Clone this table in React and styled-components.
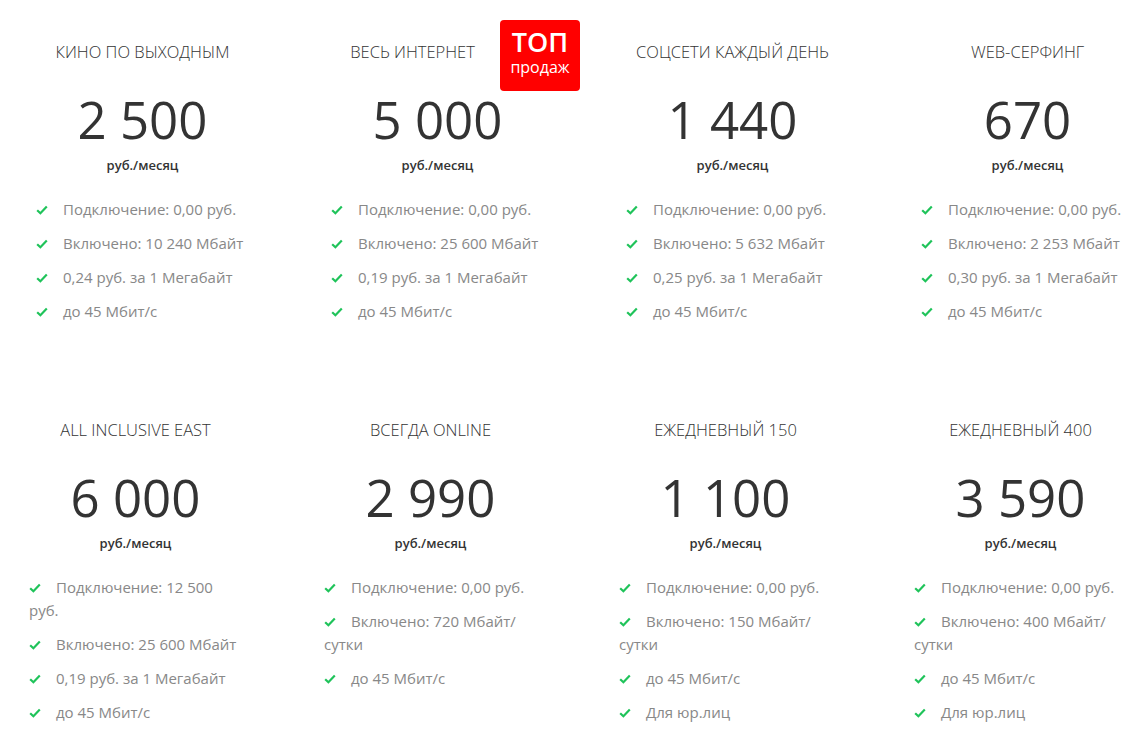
import styled, { createGlobalStyle } from "styled-components"

const GlobalStyle = createGlobalStyle`
  body {
    margin: 0;
    background: #fff;
    font-family: "Open Sans", "Liberation Sans", sans-serif;
    overflow: hidden;
  }
`

const rows = [
  [
    { title: "КИНО ПО ВЫХОДНЫМ", price: "2 500", items: ["Подключение: 0,00 руб.", "Включено: 10 240 Мбайт", "0,24 руб. за 1 Мегабайт", "до 45 Мбит/с"] },
    { title: "ВЕСЬ ИНТЕРНЕТ", price: "5 000", top: true, items: ["Подключение: 0,00 руб.", "Включено: 25 600 Мбайт", "0,19 руб. за 1 Мегабайт", "до 45 Мбит/с"] },
    { title: "СОЦСЕТИ КАЖДЫЙ ДЕНЬ", price: "1 440", items: ["Подключение: 0,00 руб.", "Включено: 5 632 Мбайт", "0,25 руб. за 1 Мегабайт", "до 45 Мбит/с"] },
    { title: "WEB-СЕРФИНГ", price: "670", items: ["Подключение: 0,00 руб.", "Включено: 2 253 Мбайт", "0,30 руб. за 1 Мегабайт", "до 45 Мбит/с"] },
  ],
  [
    { title: "ALL INCLUSIVE EAST", price: "6 000", items: ["Подключение: 12 500 руб.", "Включено: 25 600 Мбайт", "0,19 руб. за 1 Мегабайт", "до 45 Мбит/с"] },
    { title: "ВСЕГДА ONLINE", price: "2 990", items: ["Подключение: 0,00 руб.", "Включено: 720 Мбайт/ сутки", "до 45 Мбит/с"] },
    { title: "ЕЖЕДНЕВНЫЙ 150", price: "1 100", items: ["Подключение: 0,00 руб.", "Включено: 150 Мбайт/ сутки", "до 45 Мбит/с", "Для юр.лиц"] },
    { title: "ЕЖЕДНЕВНЫЙ 400", price: "3 590", items: ["Подключение: 0,00 руб.", "Включено: 400 Мбайт/ сутки", "до 45 Мбит/с", "Для юр.лиц"] },
  ],
]

function Check() {
  return (
    <CheckIcon viewBox="0 0 12 10">
      <polyline points="1.2,5.2 4.4,8.2 10.8,1.6" fill="none" stroke="#1fc35a" strokeWidth="2.2" />
    </CheckIcon>
  )
}

export default function App() {
  return (
    <>
      <GlobalStyle />
      <Page>
        {rows.map((row, r) => (
          <Row key={r} $shift={r === 0 ? -5 : -12}>
            {row.map((t) => (
              <Card key={t.title}>
                <Title $withBadge={t.top}>{t.title}</Title>
                {t.top && (
                  <Badge>
                    <BadgeBig>ТОП</BadgeBig>
                    <BadgeSmall>продаж</BadgeSmall>
                  </Badge>
                )}
                <Price>{t.price}</Price>
                <Period>руб./месяц</Period>
                <List>
                  {t.items.map((it) => (
                    <Item key={it}>
                      <Check />
                      {it}
                    </Item>
                  ))}
                </List>
              </Card>
            ))}
          </Row>
        ))}
      </Page>
    </>
  )
}

const Page = styled.div`
  padding-top: 8px;
`
const Row = styled.div`
  display: grid;
  grid-template-columns: repeat(4, 295px);
  margin-left: ${(p) => p.$shift}px;
`
const Card = styled.div`
  position: relative;
  min-height: 378px;
  padding-top: 33px;
  box-sizing: border-box;
  text-align: center;
`
const Title = styled.div`
  font-size: 16.5px;
  line-height: 22px;
  font-weight: 300;
  color: #333;
  padding-right: ${(p) => (p.$withBadge ? "50px" : "0")};
`
const Badge = styled.div`
  position: absolute;
  left: 210px;
  top: 12px;
  width: 80px;
  height: 71px;
  background: #ff0000;
  border-radius: 4px;
  color: #fff;
  display: flex;
  flex-direction: column;
  align-items: center;
  padding-top: 6px;
  box-sizing: border-box;
`
const BadgeBig = styled.div`
  font-size: 27px;
  line-height: 31px;
  font-weight: 600;
`
const BadgeSmall = styled.div`
  font-size: 16px;
  line-height: 20px;
`
const Price = styled.div`
  margin-top: 26px;
  font-size: 51px;
  line-height: 60px;
  color: #333;
`
const Period = styled.div`
  margin-top: 7px;
  font-size: 13px;
  line-height: 18px;
  font-weight: 600;
  color: #333;
`
const List = styled.ul`
  list-style: none;
  margin: 24px 0 0;
  padding: 0 40px 0 41px;
  text-align: left;
`
const Item = styled.li`
  font-size: 15px;
  line-height: 23px;
  color: #888;
  margin-bottom: 11px;
`
const CheckIcon = styled.svg`
  width: 12px;
  height: 10px;
  margin-right: 15px;
  vertical-align: 0px;
`
